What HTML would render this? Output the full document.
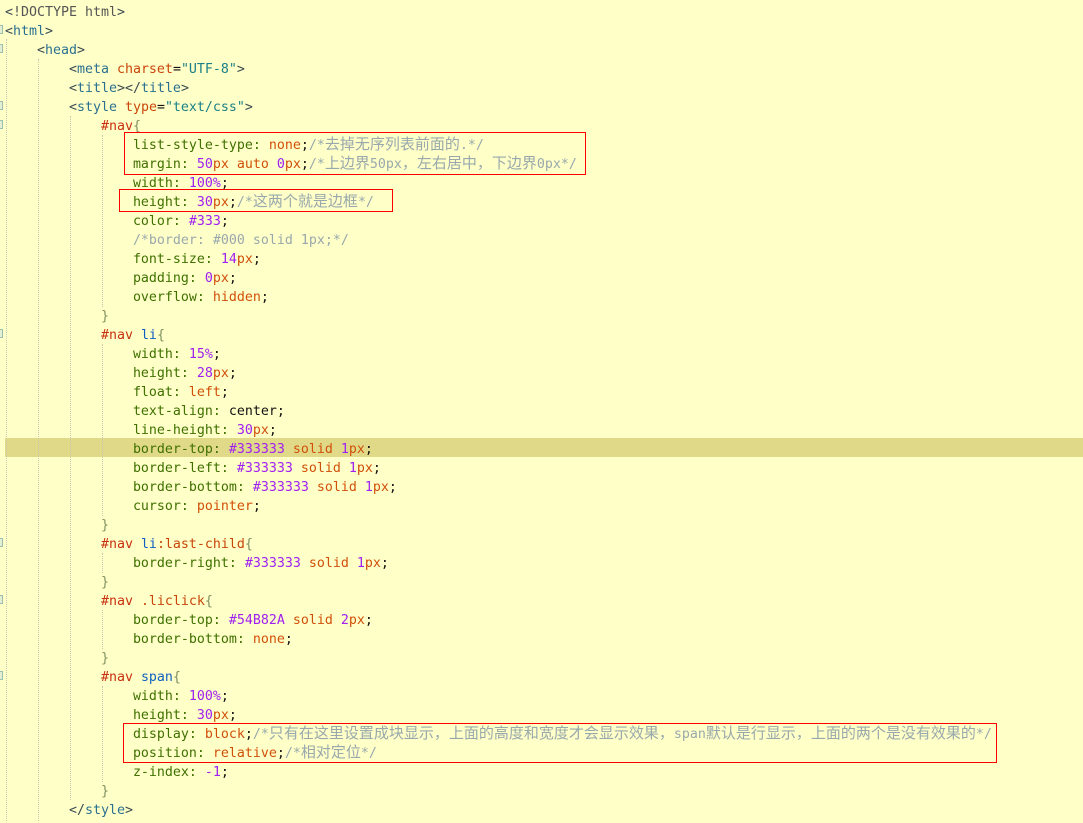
<!DOCTYPE html>
<html lang="zh">
<head>
<meta charset="UTF-8">
<title>Code</title>
<style>
html,body{margin:0;padding:0;background:#FFFFC8}
body{width:1083px;height:821px;position:relative;overflow:hidden}
#code{position:absolute;left:5px;top:1px;font-family:"DejaVu Sans Mono","Liberation Mono","Noto Sans CJK SC",monospace;font-size:13.29px;color:#222}
.l{height:19px;line-height:24px;white-space:pre;position:relative}
.hl{background:linear-gradient(#E0DA88,#E0DA88) 0 0/100% 19px no-repeat;width:1078px}
.b{color:#3a4a50}.t{color:#2a7090}.e{color:#1060c0}.a{color:#c8460a}.s{color:#1a8088}
.p{color:#3f7000}.v{color:#d0500a}.n{color:#a020f0}.c{color:#98a8ac}.k{color:#111}.h{color:#c83010}.d{color:#555}.y{color:#7f9060}
i{font-style:normal;font-size:15px;line-height:0;font-family:"WenQuanYi Zen Hei","Noto Sans CJK SC",sans-serif;font-weight:400}
.box{position:absolute;border:1px solid #f00;box-sizing:border-box;z-index:3}
.g{position:absolute;width:0;border-left:1px dotted #c8c8b4;z-index:2}
.f{position:absolute;left:0;width:3px;height:9px;border:1px solid #9cc0b0;border-left:none;box-sizing:border-box;background:#e4eed0}
</style>
</head>
<body>
<div class="g" style="left:6px;top:39px;height:782px"></div>
<div class="g" style="left:38px;top:59px;height:762px"></div>
<div class="g" style="left:70px;top:116px;height:684px"></div>
<div class="g" style="left:102px;top:135px;height:172px"></div>
<div class="g" style="left:102px;top:344px;height:172px"></div>
<div class="g" style="left:102px;top:553px;height:20px"></div>
<div class="g" style="left:102px;top:610px;height:39px"></div>
<div class="g" style="left:102px;top:686px;height:96px"></div>
<div class="f" style="top:25px"></div>
<div class="f" style="top:44px"></div>
<div class="f" style="top:101px"></div>
<div class="f" style="top:120px"></div>
<div class="f" style="top:329px"></div>
<div class="f" style="top:538px"></div>
<div class="f" style="top:595px"></div>
<div class="f" style="top:671px"></div>
<div id="code">
<div class="l"><span class="b">&lt;</span><span class="d">!DOCTYPE html</span><span class="b">&gt;</span></div>
<div class="l"><span class="b">&lt;</span><span class="t">html</span><span class="b">&gt;</span></div>
<div class="l">    <span class="b">&lt;</span><span class="t">head</span><span class="b">&gt;</span></div>
<div class="l">        <span class="b">&lt;</span><span class="t">meta</span> <span class="a">charset</span><span class="k">=</span><span class="s">"UTF-8"</span><span class="b">&gt;</span></div>
<div class="l">        <span class="b">&lt;</span><span class="t">title</span><span class="b">&gt;&lt;/</span><span class="t">title</span><span class="b">&gt;</span></div>
<div class="l">        <span class="b">&lt;</span><span class="t">style</span> <span class="a">type</span><span class="k">=</span><span class="s">"text/css"</span><span class="b">&gt;</span></div>
<div class="l">            <span class="h">#nav</span><span class="y">{</span></div>
<div class="l">                <span class="p">list-style-type:</span> <span class="v">none</span><span class="k">;</span><span class="c">/*<i>去掉无序列表前面的</i>.*/</span></div>
<div class="l">                <span class="p">margin:</span> <span class="n">50</span><span class="v">px auto </span><span class="n">0</span><span class="v">px</span><span class="k">;</span><span class="c">/*<i>上边界</i>50px<i>，左右居中，下边界</i>0px*/</span></div>
<div class="l">                <span class="p">width:</span> <span class="n">100%</span><span class="k">;</span></div>
<div class="l">                <span class="p">height:</span> <span class="n">30</span><span class="v">px</span><span class="k">;</span><span class="c">/*<i>这两个就是边框</i>*/</span></div>
<div class="l">                <span class="p">color:</span> <span class="n">#333</span><span class="k">;</span></div>
<div class="l">                <span class="c">/*border: #000 solid 1px;*/</span></div>
<div class="l">                <span class="p">font-size:</span> <span class="n">14</span><span class="v">px</span><span class="k">;</span></div>
<div class="l">                <span class="p">padding:</span> <span class="n">0</span><span class="v">px</span><span class="k">;</span></div>
<div class="l">                <span class="p">overflow:</span> <span class="v">hidden</span><span class="k">;</span></div>
<div class="l">            <span class="y">}</span></div>
<div class="l">            <span class="h">#nav</span> <span class="e">li</span><span class="y">{</span></div>
<div class="l">                <span class="p">width:</span> <span class="n">15%</span><span class="k">;</span></div>
<div class="l">                <span class="p">height:</span> <span class="n">28</span><span class="v">px</span><span class="k">;</span></div>
<div class="l">                <span class="p">float:</span> <span class="v">left</span><span class="k">;</span></div>
<div class="l">                <span class="p">text-align:</span> <span class="k">center;</span></div>
<div class="l">                <span class="p">line-height:</span> <span class="n">30</span><span class="v">px</span><span class="k">;</span></div>
<div class="l hl">                <span class="p">border-top:</span> <span class="n">#333333</span> <span class="v">solid</span> <span class="n">1</span><span class="v">px</span><span class="k">;</span></div>
<div class="l">                <span class="p">border-left:</span> <span class="n">#333333</span> <span class="v">solid</span> <span class="n">1</span><span class="v">px</span><span class="k">;</span></div>
<div class="l">                <span class="p">border-bottom:</span> <span class="n">#333333</span> <span class="v">solid</span> <span class="n">1</span><span class="v">px</span><span class="k">;</span></div>
<div class="l">                <span class="p">cursor:</span> <span class="v">pointer</span><span class="k">;</span></div>
<div class="l">            <span class="y">}</span></div>
<div class="l">            <span class="h">#nav</span> <span class="e">li</span><span class="a">:last-child</span><span class="y">{</span></div>
<div class="l">                <span class="p">border-right:</span> <span class="n">#333333</span> <span class="v">solid</span> <span class="n">1</span><span class="v">px</span><span class="k">;</span></div>
<div class="l">            <span class="y">}</span></div>
<div class="l">            <span class="h">#nav</span> <span class="a">.liclick</span><span class="y">{</span></div>
<div class="l">                <span class="p">border-top:</span> <span class="n">#54B82A</span> <span class="v">solid</span> <span class="n">2</span><span class="v">px</span><span class="k">;</span></div>
<div class="l">                <span class="p">border-bottom:</span> <span class="v">none</span><span class="k">;</span></div>
<div class="l">            <span class="y">}</span></div>
<div class="l">            <span class="h">#nav</span> <span class="e">span</span><span class="y">{</span></div>
<div class="l">                <span class="p">width:</span> <span class="n">100%</span><span class="k">;</span></div>
<div class="l">                <span class="p">height:</span> <span class="n">30</span><span class="v">px</span><span class="k">;</span></div>
<div class="l">                <span class="p">display:</span> <span class="v">block</span><span class="k">;</span><span class="c">/*<i>只有在这里设置成块显示，上面的高度和宽度才会显示效果，</i>span<i>默认是行显示，上面的两个是没有效果的</i>*/</span></div>
<div class="l">                <span class="p">position:</span> <span class="v">relative</span><span class="k">;</span><span class="c">/*<i>相对定位</i>*/</span></div>
<div class="l">                <span class="p">z-index:</span> <span class="n">-1</span><span class="k">;</span></div>
<div class="l">            <span class="y">}</span></div>
<div class="l">        <span class="b">&lt;/</span><span class="t">style</span><span class="b">&gt;</span></div>
</div>
<div class="box" style="left:124px;top:132px;width:462px;height:43px"></div>
<div class="box" style="left:119px;top:189px;width:274px;height:23px"></div>
<div class="box" style="left:123px;top:723px;width:874px;height:40px"></div>
</body>
</html>
